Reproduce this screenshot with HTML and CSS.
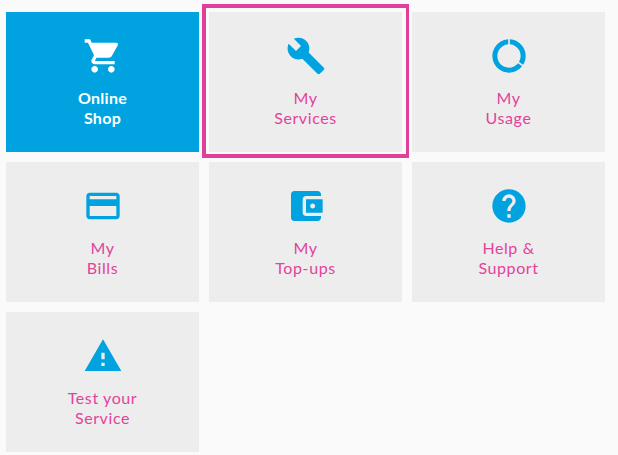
FILE: index.html
```html
<!DOCTYPE html>
<html lang="en">
<head>
<meta charset="utf-8">
<title>Menu</title>
<link rel="stylesheet" href="styles.css">
</head>
<body>
<nav class="grid">
  <a class="tile tile-primary" href="#">
    <svg class="icon" viewBox="0 0 24 24"><path d="M7 18c-1.1 0-1.99.9-1.99 2S5.9 22 7 22s2-.9 2-2-.9-2-2-2zM1 2v2h2l3.6 7.59-1.35 2.45c-.16.28-.25.61-.25.96 0 1.1.9 2 2 2h12v-2H7.42c-.14 0-.25-.11-.25-.25l.03-.12.9-1.63h7.45c.75 0 1.41-.41 1.75-1.03l3.58-6.49c.08-.14.12-.31.12-.48 0-.55-.45-1-1-1H5.21l-.94-2H1zm16 16c-1.1 0-1.99.9-1.99 2s.89 2 1.99 2 2-.9 2-2-.9-2-2-2z"/></svg>
    <span class="label">Online<br>Shop</span>
  </a>
  <a class="tile tile-focus" href="#">
    <svg class="icon" viewBox="0 0 24 24"><path d="M22.7 19l-9.1-9.1c.9-2.3.4-5-1.5-6.9-2-2-5-2.4-7.4-1.3L9 6 6 9 1.6 4.7C.4 7.1.9 10.1 2.9 12.1c1.9 1.9 4.6 2.4 6.9 1.5l9.1 9.1c.4.4 1 .4 1.4 0l2.3-2.3c.5-.4.5-1.1.1-1.4z"/></svg>
    <span class="label">My<br>Services</span>
  </a>
  <a class="tile" href="#">
    <svg class="icon" viewBox="0 0 24 24"><path d="M12.5 2.010A10 10 0 0 1 20.480 17.300L18 15.600A7 7 0 0 0 12.500 5.020Z"/><path d="M11.500 2.010A10 10 0 1 0 19.880 18.160L17.440 16.400A7 7 0 1 1 11.500 5.020Z"/></svg>
    <span class="label">My<br>Usage</span>
  </a>
  <a class="tile" href="#">
    <svg class="icon" viewBox="0 0 24 24"><path d="M20 4H4c-1.110 0-1.990.89-1.990 2L2 18c0 1.110.89 2 2 2h16c1.110 0 2-.89 2-2V6c0-1.110-.89-2-2-2zm0 14H4v-6h16v6zm0-10H4V6h16v2z"/></svg>
    <span class="label">My<br>Bills</span>
  </a>
  <a class="tile" href="#">
    <svg class="icon" viewBox="0 0 24 24"><path d="M21 18v1c0 1.100-.9 2-2 2H5c-1.110 0-2-.9-2-2V5c0-1.100.89-2 2-2h14c1.100 0 2 .9 2 2v1h-9c-1.110 0-2 .9-2 2v8c0 1.100.89 2 2 2h9zm-9-2h10V8H12v8zm4-2.500c-.83 0-1.500-.67-1.500-1.500s.67-1.500 1.500-1.500 1.500.67 1.500 1.500-.67 1.500-1.500 1.500z"/></svg>
    <span class="label">My<br>Top-ups</span>
  </a>
  <a class="tile" href="#">
    <svg class="icon" viewBox="0 0 24 24"><path d="M12 2C6.480 2 2 6.480 2 12s4.480 10 10 10 10-4.480 10-10S17.520 2 12 2zm1 17h-2v-2h2v2zm2.070-7.750l-.9.92C13.450 12.900 13 13.500 13 15h-2v-.5c0-1.100.45-2.100 1.170-2.830l1.240-1.260c.37-.36.59-.86.59-1.410 0-1.100-.9-2-2-2s-2 .9-2 2H8c0-2.210 1.790-4 4-4s4 1.790 4 4c0 .88-.36 1.680-.93 2.250z"/></svg>
    <span class="label">Help &amp;<br>Support</span>
  </a>
  <a class="tile" href="#">
    <svg class="icon" viewBox="0 0 24 24"><path d="M1 21h22L12 2 1 21zm12-3h-2v-2h2v2zm0-4h-2v-4h2v4z"/></svg>
    <span class="label">Test your<br>Service</span>
  </a>
</nav>
</body>
</html>
```
FILE: styles.css
```css
html, body {
  margin: 0;
  padding: 0;
  background: #fafafa;
}

body {
  font-family: Lato, "Noto Sans", sans-serif;
}

.grid {
  display: grid;
  grid-template-columns: repeat(3, 193px);
  grid-auto-rows: 140px;
  gap: 10px;
  padding: 12px 0 0 6px;
}

.tile {
  display: flex;
  flex-direction: column;
  align-items: center;
  box-sizing: border-box;
  padding-top: 24px;
  background: #ededed;
  color: #e2439c;
  text-decoration: none;
  text-align: center;
}

.tile-primary {
  background: #00a3e0;
  color: #fff;
  font-weight: 700;
}

.tile-focus {
  position: relative;
}

.tile-focus::after {
  content: "";
  position: absolute;
  top: -8px;
  right: -7px;
  bottom: -6px;
  left: -7px;
  border: 4px solid #e03f9a;
  border-right-width: 3px;
}

.icon {
  display: block;
  width: 40px;
  height: 40px;
  fill: #00a3e0;
}

.tile-primary .icon {
  fill: #fff;
}

.label {
  display: block;
  margin-top: 12px;
  font-size: 16px;
  line-height: 20px;
  letter-spacing: 0.6px;
}

.tile-primary .label {
  letter-spacing: 0.3px;
}
```
